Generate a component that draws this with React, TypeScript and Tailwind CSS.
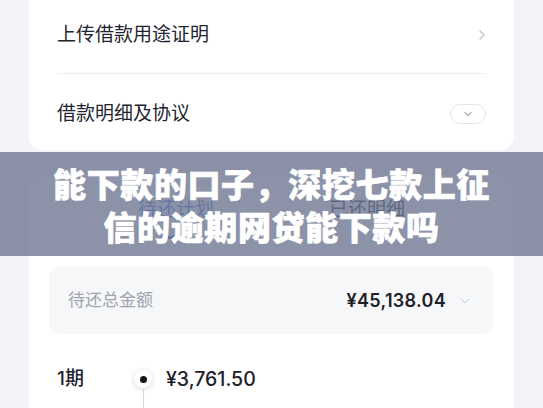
import React from 'react'
import { ChevronDown, ChevronRight } from 'lucide-react'

const font = { fontFamily: 'Inter, "Noto Sans CJK SC", sans-serif' }

export default function App() {
  return (
    <div
      className="relative h-[408px] w-full overflow-hidden bg-[#f2f4fa] px-[29px] text-[#22252f]"
      style={font}
    >
      {/* top card (scrolled, top cut off) */}
      <div className="h-[150px] rounded-b-[14px] bg-white px-[28px]">
        <div className="flex h-[74px] items-center justify-between border-b border-[#eceef3] pb-[4px]">
          <span className="text-[19px] leading-[28px]">上传借款用途证明</span>
          <ChevronRight size={16} strokeWidth={2} className="-mr-[4px] text-[#c0c4ce]" />
        </div>
        <div className="flex h-[76px] items-center justify-between pt-[3px]">
          <span className="text-[19px] leading-[28px]">借款明细及协议</span>
          <div className="flex h-[20px] w-[36px] items-center justify-center rounded-full border border-[#e1e4eb]">
            <ChevronDown size={12} strokeWidth={3} className="text-[#b3b8c6]" />
          </div>
        </div>
      </div>

      {/* repayment card */}
      <div className="mt-[25px] rounded-t-[14px] bg-white">
        <div className="flex h-[64px] justify-center gap-[115px] pt-[22px]">
          <div className="flex flex-col items-center">
            <span className="text-[19px] leading-[26px] text-[#3b6fe0]">待还计划</span>
            <span className="mt-[13px] h-[3px] w-[30px] rounded-full bg-[#3b6fe0]" />
          </div>
          <span className="text-[19px] leading-[26px] text-[#22252f]">已还明细</span>
        </div>

        <div className="mx-[20px] mt-[28px] flex h-[67px] items-center justify-between rounded-[10px] bg-[#f6f7f9] pl-[19px] pr-[21px]">
          <span className="text-[17px] text-[#a0a4ae]">待还总金额</span>
          <div className="flex items-center gap-[11px]">
            <span className="text-[18px] font-semibold tracking-[0.3px] text-[#1d2029]">¥45,138.04</span>
            <ChevronDown size={16} strokeWidth={1.5} className="text-[#c4c8d0]" />
          </div>
        </div>

        <div className="mt-[32px] flex px-[28px]">
          <div className="w-[77px]">
            <div className="text-[19px] font-medium leading-[26px]">1期</div>
            <div className="mt-[14px] text-[14px] text-[#a0a4ae]">2024/08/28</div>
          </div>
          <div className="flex w-[18px] flex-col items-center">
            <div className="mt-[4px] flex h-[18px] w-[18px] items-center justify-center rounded-full bg-white shadow-[0_1px_5px_rgba(30,40,70,0.2)]">
              <div className="h-[7px] w-[7px] rounded-full bg-[#15171d]" />
            </div>
            <div className="h-[40px] w-px bg-[#d5d8df]" />
          </div>
          <div className="ml-[14px]">
            <div className="text-[19.5px] font-medium leading-[26px] text-[#1d2029]">¥3,761.50</div>
            <div className="mt-[14px] flex gap-[40px] text-[14px] text-[#a0a4ae]">
              <span>本金 ¥3,562.11</span>
              <span>利息 ¥199.39</span>
            </div>
          </div>
        </div>
      </div>

      {/* title overlay */}
      <div className="absolute left-0 right-0 top-[152px] h-[104px] bg-[#6f7892]/80 pt-[10px]">
        <h1
          className="text-center text-[33px] font-black leading-[43px] tracking-[0.6px] text-white [-webkit-text-stroke:0.7px_white]"
          style={{ fontFamily: '"Noto Sans CJK SC", sans-serif' }}
        >
          能下款的口子，深挖七款上征
          <br />
          信的逾期网贷能下款吗
        </h1>
      </div>
    </div>
  )
}
